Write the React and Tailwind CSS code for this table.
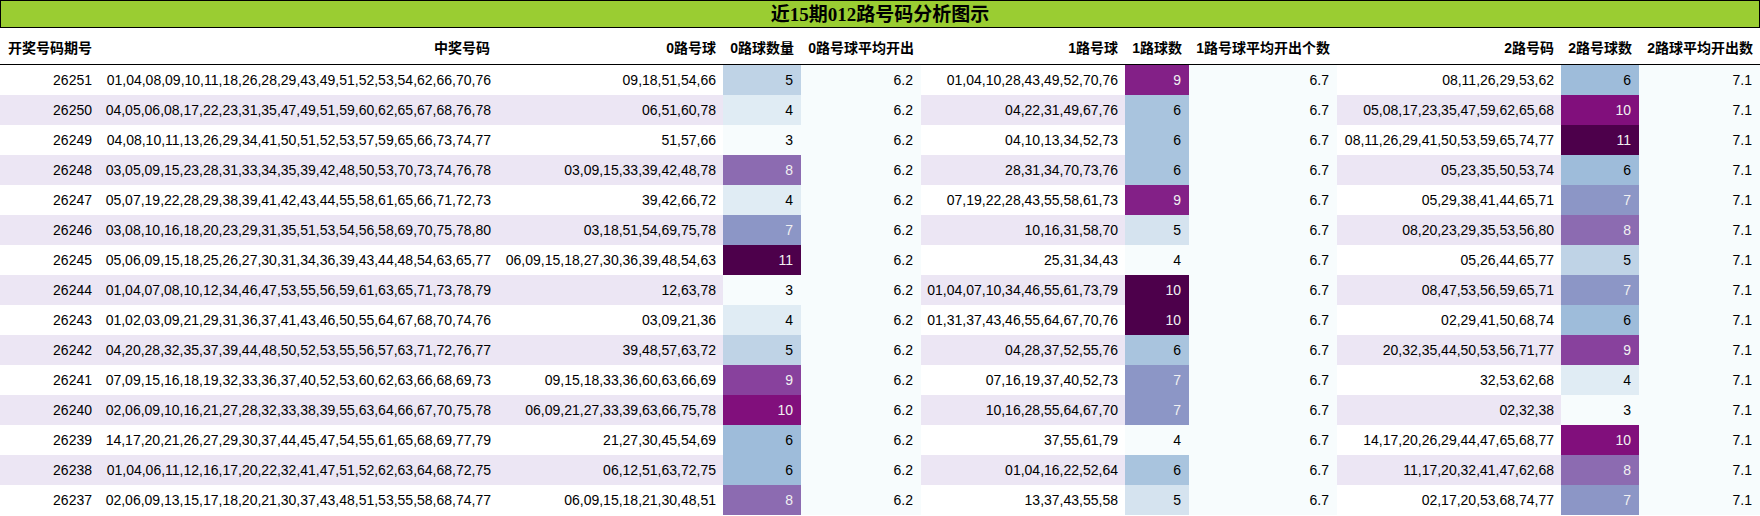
import React from 'react';

// 近15期 012路 数据
const rows = [
  ['26251', '01,04,08,09,10,11,18,26,28,29,43,49,51,52,53,54,62,66,70,76', '09,18,51,54,66', 5, '6.2', '01,04,10,28,43,49,52,70,76', 9, '6.7', '08,11,26,29,53,62', 6, '7.1'],
  ['26250', '04,05,06,08,17,22,23,31,35,47,49,51,59,60,62,65,67,68,76,78', '06,51,60,78', 4, '6.2', '04,22,31,49,67,76', 6, '6.7', '05,08,17,23,35,47,59,62,65,68', 10, '7.1'],
  ['26249', '04,08,10,11,13,26,29,34,41,50,51,52,53,57,59,65,66,73,74,77', '51,57,66', 3, '6.2', '04,10,13,34,52,73', 6, '6.7', '08,11,26,29,41,50,53,59,65,74,77', 11, '7.1'],
  ['26248', '03,05,09,15,23,28,31,33,34,35,39,42,48,50,53,70,73,74,76,78', '03,09,15,33,39,42,48,78', 8, '6.2', '28,31,34,70,73,76', 6, '6.7', '05,23,35,50,53,74', 6, '7.1'],
  ['26247', '05,07,19,22,28,29,38,39,41,42,43,44,55,58,61,65,66,71,72,73', '39,42,66,72', 4, '6.2', '07,19,22,28,43,55,58,61,73', 9, '6.7', '05,29,38,41,44,65,71', 7, '7.1'],
  ['26246', '03,08,10,16,18,20,23,29,31,35,51,53,54,56,58,69,70,75,78,80', '03,18,51,54,69,75,78', 7, '6.2', '10,16,31,58,70', 5, '6.7', '08,20,23,29,35,53,56,80', 8, '7.1'],
  ['26245', '05,06,09,15,18,25,26,27,30,31,34,36,39,43,44,48,54,63,65,77', '06,09,15,18,27,30,36,39,48,54,63', 11, '6.2', '25,31,34,43', 4, '6.7', '05,26,44,65,77', 5, '7.1'],
  ['26244', '01,04,07,08,10,12,34,46,47,53,55,56,59,61,63,65,71,73,78,79', '12,63,78', 3, '6.2', '01,04,07,10,34,46,55,61,73,79', 10, '6.7', '08,47,53,56,59,65,71', 7, '7.1'],
  ['26243', '01,02,03,09,21,29,31,36,37,41,43,46,50,55,64,67,68,70,74,76', '03,09,21,36', 4, '6.2', '01,31,37,43,46,55,64,67,70,76', 10, '6.7', '02,29,41,50,68,74', 6, '7.1'],
  ['26242', '04,20,28,32,35,37,39,44,48,50,52,53,55,56,57,63,71,72,76,77', '39,48,57,63,72', 5, '6.2', '04,28,37,52,55,76', 6, '6.7', '20,32,35,44,50,53,56,71,77', 9, '7.1'],
  ['26241', '07,09,15,16,18,19,32,33,36,37,40,52,53,60,62,63,66,68,69,73', '09,15,18,33,36,60,63,66,69', 9, '6.2', '07,16,19,37,40,52,73', 7, '6.7', '32,53,62,68', 4, '7.1'],
  ['26240', '02,06,09,10,16,21,27,28,32,33,38,39,55,63,64,66,67,70,75,78', '06,09,21,27,33,39,63,66,75,78', 10, '6.2', '10,16,28,55,64,67,70', 7, '6.7', '02,32,38', 3, '7.1'],
  ['26239', '14,17,20,21,26,27,29,30,37,44,45,47,54,55,61,65,68,69,77,79', '21,27,30,45,54,69', 6, '6.2', '37,55,61,79', 4, '6.7', '14,17,20,26,29,44,47,65,68,77', 10, '7.1'],
  ['26238', '01,04,06,11,12,16,17,20,22,32,41,47,51,52,62,63,64,68,72,75', '06,12,51,63,72,75', 6, '6.2', '01,04,16,22,52,64', 6, '6.7', '11,17,20,32,41,47,62,68', 8, '7.1'],
  ['26237', '02,06,09,13,15,17,18,20,21,30,37,43,48,51,53,55,58,68,74,77', '06,09,15,18,21,30,48,51', 8, '6.2', '13,37,43,55,58', 5, '6.7', '02,17,20,53,68,74,77', 7, '7.1'],
];

const headers = ['开奖号码期号', '中奖号码', '0路号球', '0路球数量', '0路号球平均开出', '1路号球', '1路球数', '1路号球平均开出个数', '2路号码', '2路号球数', '2路球平均开出数'];

// BuPu 渐变, 区间 3–11
const wide = {
  3: 'bg-[#f7fcfd] text-black',
  4: 'bg-[#e0ecf4] text-black',
  5: 'bg-[#bfd3e6] text-black',
  6: 'bg-[#9ebcda] text-black',
  7: 'bg-[#8c96c6] text-[#f1f1f1]',
  8: 'bg-[#8c6bb1] text-[#f1f1f1]',
  9: 'bg-[#88419d] text-[#f1f1f1]',
  10: 'bg-[#810f7c] text-[#f1f1f1]',
  11: 'bg-[#4d004b] text-[#f1f1f1]',
};

// BuPu 渐变, 区间 4–10
const narrow = {
  4: 'bg-[#f7fcfd] text-black',
  5: 'bg-[#d5e3ef] text-black',
  6: 'bg-[#a9c4de] text-black',
  7: 'bg-[#8c96c6] text-[#f1f1f1]',
  8: 'bg-[#8a5aa9] text-[#f1f1f1]',
  9: 'bg-[#832087] text-[#f1f1f1]',
  10: 'bg-[#4d004b] text-[#f1f1f1]',
};

const grid = 'grid grid-cols-[99px_398px_226px_78px_120px_204px_64px_148px_224px_78px_121px]';

const App = () => {
  return (
    <div className="w-[1760px] bg-white font-['Liberation_Sans','Noto_Sans_CJK_SC',sans-serif] text-[14px] text-black">
      <div className="h-[28px] border border-black bg-[#9acd32] flex items-center justify-center font-['Liberation_Serif','Noto_Sans_CJK_SC',serif] text-[19px] font-bold leading-none">
        近15期012路号码分析图示
      </div>

      {/* Header */}
      <div className={`${grid} h-[37px] border-b border-black`}>
        {headers.map((h) => (
          <div key={h} className="flex items-center justify-end pr-[7px] pt-[4px] font-bold whitespace-nowrap">
            {h}
          </div>
        ))}
      </div>

      {/* Rows */}
      {rows.map((r, i) => {
        const stripe = i % 2 === 1 ? 'bg-[#ece6f4]' : 'bg-white';
        return (
          <div key={r[0]} className={`${grid} h-[30px]`}>
            <div className={`${stripe} flex items-center justify-end pr-[7px]`}>{r[0]}</div>
            <div className={`${stripe} flex items-center justify-end pr-[6px] whitespace-nowrap`}>{r[1]}</div>
            <div className={`${stripe} flex items-center justify-end pr-[7px] whitespace-nowrap`}>{r[2]}</div>
            <div className={`${wide[r[3]]} flex items-center justify-end pr-[8px]`}>{r[3]}</div>
            <div className="bg-[#f7fcfd] flex items-center justify-end pr-[8px]">{r[4]}</div>
            <div className={`${stripe} flex items-center justify-end pr-[7px] whitespace-nowrap`}>{r[5]}</div>
            <div className={`${narrow[r[6]]} flex items-center justify-end pr-[8px]`}>{r[6]}</div>
            <div className="bg-[#f7fcfd] flex items-center justify-end pr-[8px]">{r[7]}</div>
            <div className={`${stripe} flex items-center justify-end pr-[7px] whitespace-nowrap`}>{r[8]}</div>
            <div className={`${wide[r[9]]} flex items-center justify-end pr-[8px]`}>{r[9]}</div>
            <div className="bg-[#f7fcfd] flex items-center justify-end pr-[8px]">{r[10]}</div>
          </div>
        );
      })}
    </div>
  );
};

export default App;
